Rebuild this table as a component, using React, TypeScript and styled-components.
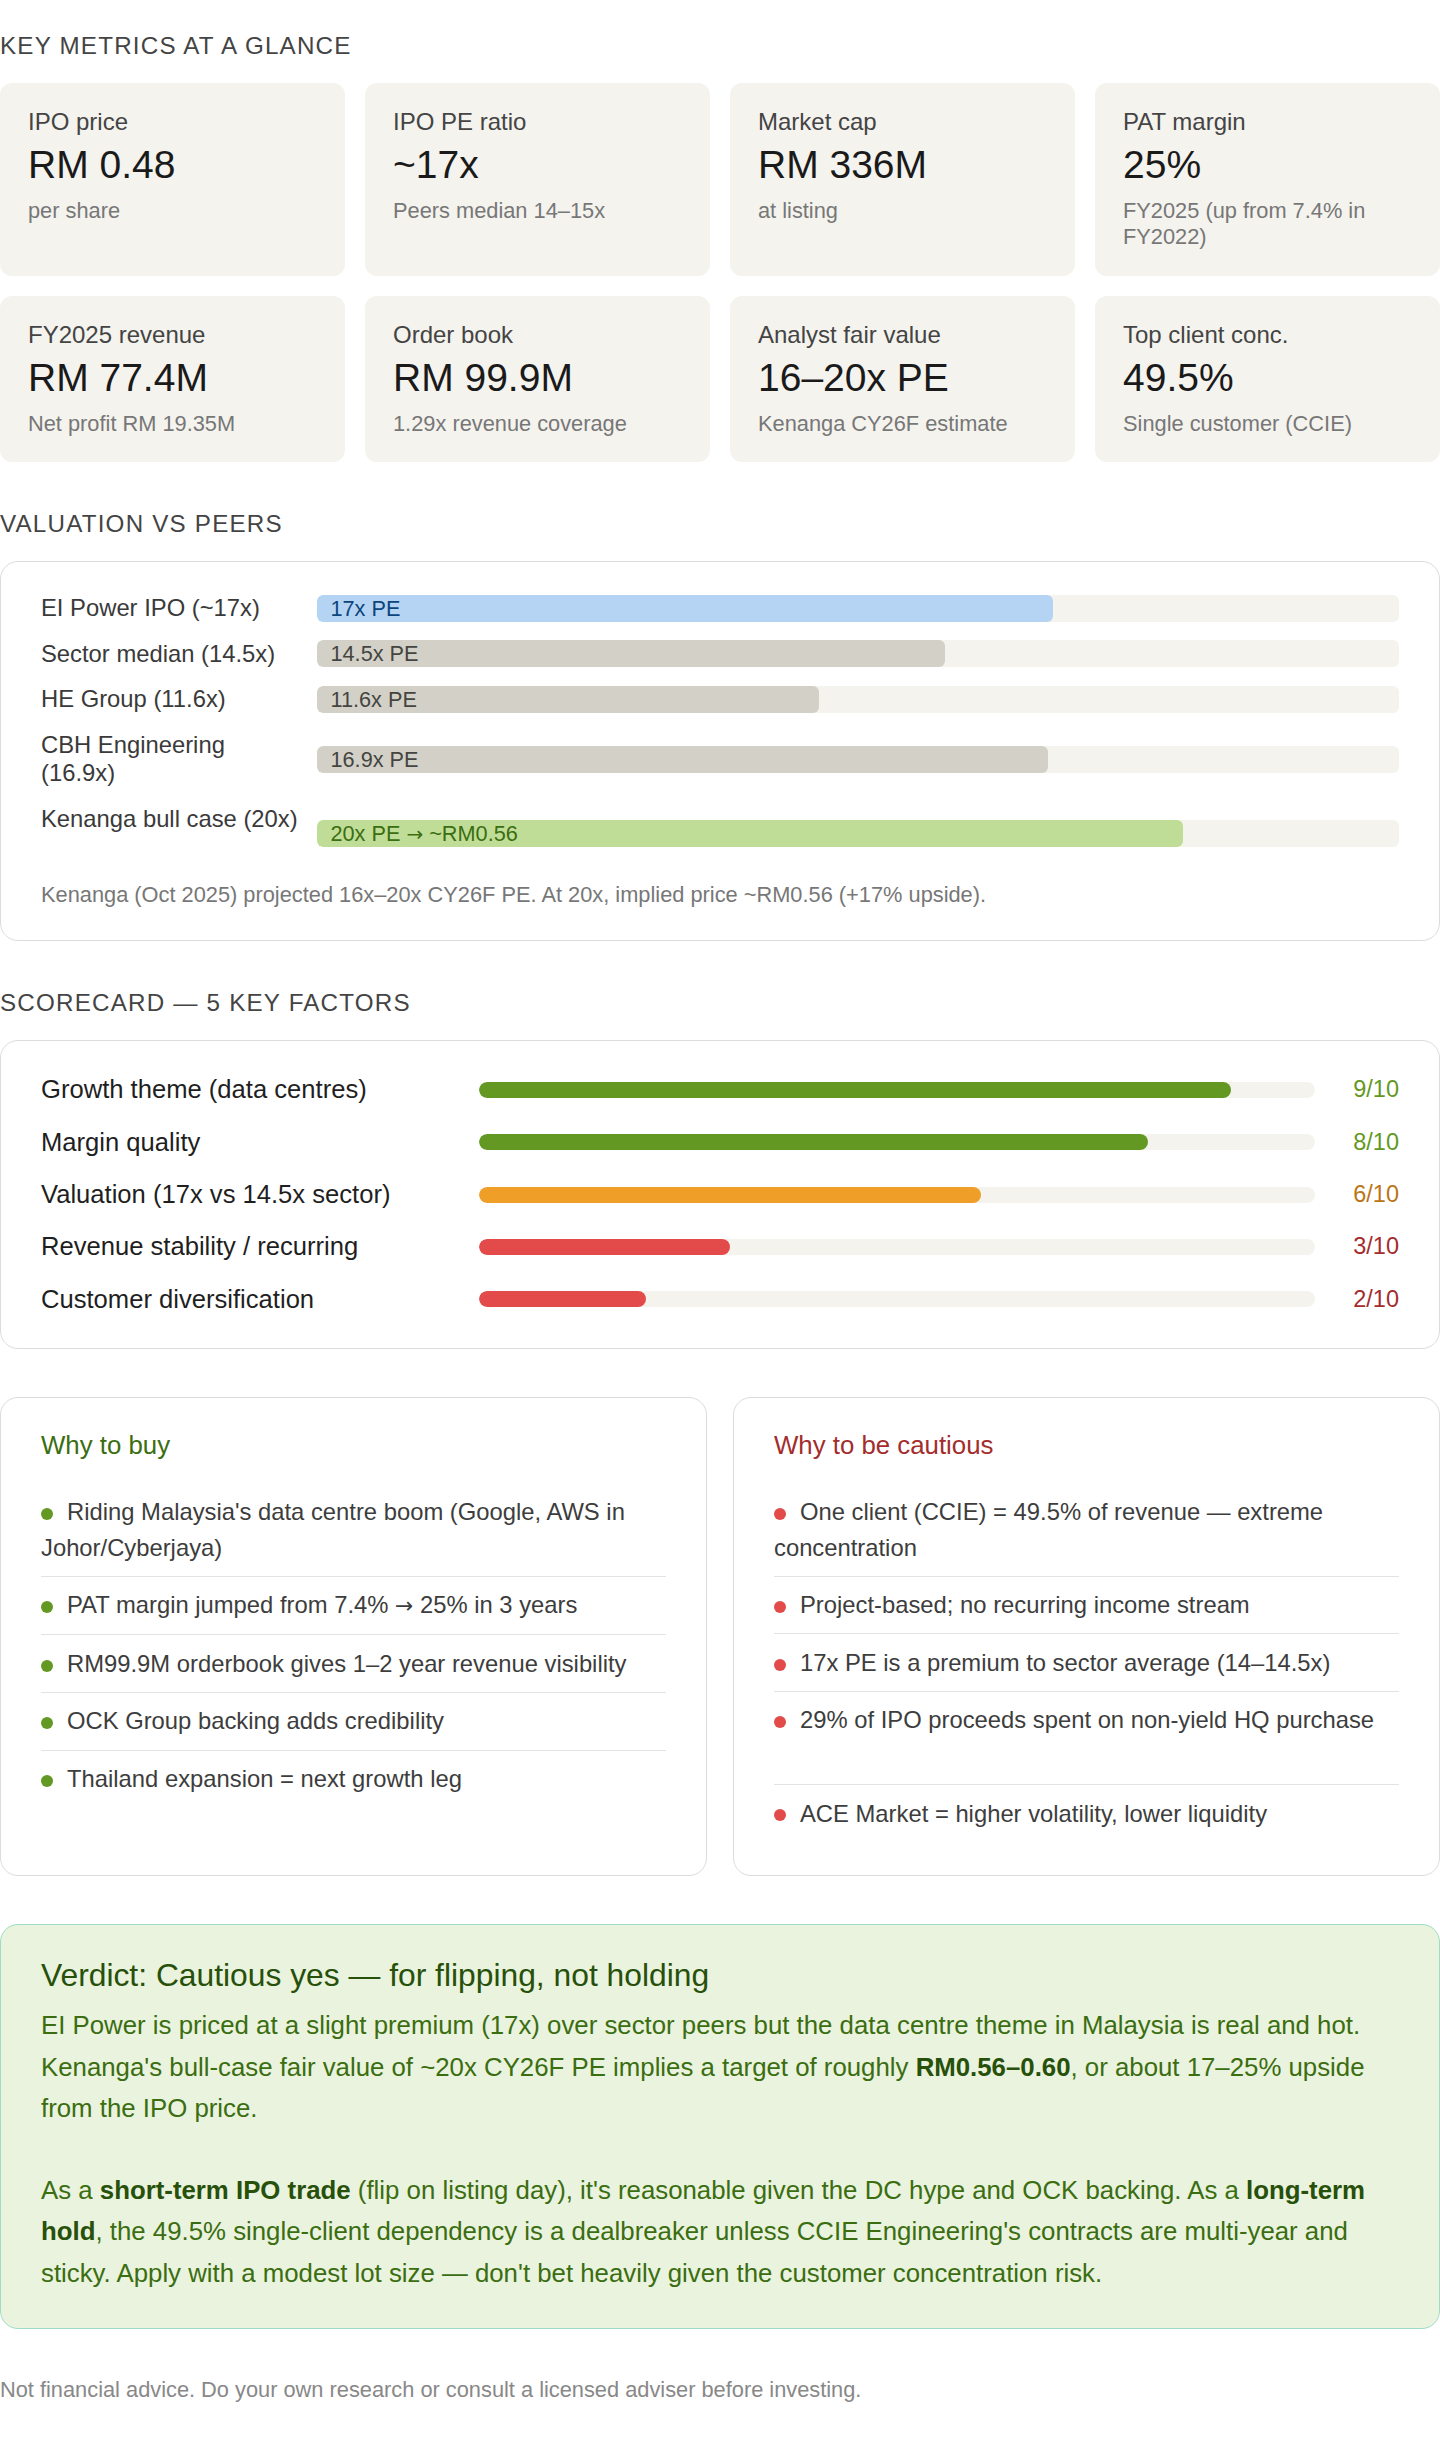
import React from "react";
import styled, { createGlobalStyle } from "styled-components";

const GlobalStyle = createGlobalStyle`
  body {
    margin: 0;
    background: #ffffff;
    font-family: "Liberation Sans", Arial, sans-serif;
    color: #1a1a1a;
  }
`;

interface Metric {
  label: string;
  value: string;
  sub: string;
}

const metrics: Metric[] = [
  { label: "IPO price", value: "RM 0.48", sub: "per share" },
  { label: "IPO PE ratio", value: "~17x", sub: "Peers median 14–15x" },
  { label: "Market cap", value: "RM 336M", sub: "at listing" },
  { label: "PAT margin", value: "25%", sub: "FY2025 (up from 7.4% in FY2022)" },
  { label: "FY2025 revenue", value: "RM 77.4M", sub: "Net profit RM 19.35M" },
  { label: "Order book", value: "RM 99.9M", sub: "1.29x revenue coverage" },
  { label: "Analyst fair value", value: "16–20x PE", sub: "Kenanga CY26F estimate" },
  { label: "Top client conc.", value: "49.5%", sub: "Single customer (CCIE)" },
];

type BarTone = "blue" | "grey" | "green";

interface Peer {
  label: string;
  pe: number;
  text: string;
  tone: BarTone;
  lines?: number;
}

const peers: Peer[] = [
  { label: "EI Power IPO (~17x)", pe: 17, text: "17x PE", tone: "blue" },
  { label: "Sector median (14.5x)", pe: 14.5, text: "14.5x PE", tone: "grey" },
  { label: "HE Group (11.6x)", pe: 11.6, text: "11.6x PE", tone: "grey" },
  { label: "CBH Engineering (16.9x)", pe: 16.9, text: "16.9x PE", tone: "grey" },
  { label: "Kenanga bull case (20x)", pe: 20, text: "20x PE → ~RM0.56", tone: "green", lines: 2 },
];

const PE_MAX = 25;

const barColors: Record<BarTone, { bg: string; fg: string }> = {
  blue: { bg: "#b5d4f4", fg: "#0c447c" },
  grey: { bg: "#d3d1c7", fg: "#444441" },
  green: { bg: "#c0dd97", fg: "#3b6d11" },
};

type ScoreTone = "good" | "mid" | "bad";

const scoreColors: Record<ScoreTone, { bar: string; text: string }> = {
  good: { bar: "#639922", text: "#639922" },
  mid: { bar: "#ef9f27", text: "#ba7517" },
  bad: { bar: "#e24b4a", text: "#a32d2d" },
};

const factors: { label: string; score: number; tone: ScoreTone }[] = [
  { label: "Growth theme (data centres)", score: 9, tone: "good" },
  { label: "Margin quality", score: 8, tone: "good" },
  { label: "Valuation (17x vs 14.5x sector)", score: 6, tone: "mid" },
  { label: "Revenue stability / recurring", score: 3, tone: "bad" },
  { label: "Customer diversification", score: 2, tone: "bad" },
];

const buyReasons: { text: string; lines?: number }[] = [
  { text: "Riding Malaysia's data centre boom (Google, AWS in Johor/Cyberjaya)" },
  { text: "PAT margin jumped from 7.4% → 25% in 3 years" },
  { text: "RM99.9M orderbook gives 1–2 year revenue visibility" },
  { text: "OCK Group backing adds credibility" },
  { text: "Thailand expansion = next growth leg" },
];

const cautionReasons: { text: string; lines?: number }[] = [
  { text: "One client (CCIE) = 49.5% of revenue — extreme concentration" },
  { text: "Project-based; no recurring income stream" },
  { text: "17x PE is a premium to sector average (14–14.5x)" },
  { text: "29% of IPO proceeds spent on non-yield HQ purchase", lines: 2 },
  { text: "ACE Market = higher volatility, lower liquidity" },
];

// the arrow glyph of Liberation Sans is tiny, so it is set in DejaVu
const withArrows = (text: string) => {
  const parts = text.split("→");
  return parts.map((part, i) => (
    <React.Fragment key={i}>
      {part}
      {i < parts.length - 1 && <Arrow>→</Arrow>}
    </React.Fragment>
  ));
};

const App = () => {
  return (
    <>
      <GlobalStyle />
      <Page>
        <Section>
          <SectionTitle>Key metrics at a glance</SectionTitle>
          <MetricGrid>
            {metrics.map((m) => (
              <MetricCard key={m.label}>
                <MetricLabel>{m.label}</MetricLabel>
                <MetricValue>{m.value}</MetricValue>
                <MetricSub>{m.sub}</MetricSub>
              </MetricCard>
            ))}
          </MetricGrid>
        </Section>

        <Section>
          <SectionTitle>Valuation vs peers</SectionTitle>
          <Panel>
            <PeerList>
              {peers.map((p) => (
                <PeerRow key={p.label}>
                  <PeerLabel $lines={p.lines ?? 1}>{p.label}</PeerLabel>
                  <PeerTrack>
                    <PeerFill
                      $tone={p.tone}
                      style={{ width: `${(p.pe / PE_MAX) * 100}%` }}
                    >
                      {withArrows(p.text)}
                    </PeerFill>
                  </PeerTrack>
                </PeerRow>
              ))}
            </PeerList>
            <Footnote>
              Kenanga (Oct 2025) projected 16x–20x CY26F PE. At 20x, implied
              price ~RM0.56 (+17% upside).
            </Footnote>
          </Panel>
        </Section>

        <Section>
          <SectionTitle>Scorecard — 5 key factors</SectionTitle>
          <ScorePanel>
            <ScoreList>
              {factors.map((f) => (
                <ScoreRow key={f.label}>
                  <ScoreLabel>{f.label}</ScoreLabel>
                  <ScoreTrack>
                    <ScoreFill
                      $tone={f.tone}
                      style={{ width: `${f.score * 10}%` }}
                    />
                  </ScoreTrack>
                  <ScoreValue $tone={f.tone}>{f.score}/10</ScoreValue>
                </ScoreRow>
              ))}
            </ScoreList>
          </ScorePanel>
        </Section>

        <ReasonGrid>
          <ReasonBox>
            <ReasonTitle $color="#3b6d11">Why to buy</ReasonTitle>
            <ReasonList>
              {buyReasons.map((r) => (
                <ReasonItem key={r.text} $lines={r.lines ?? 1}>
                  <Dot $color="#639922" />
                  {withArrows(r.text)}
                </ReasonItem>
              ))}
            </ReasonList>
          </ReasonBox>
          <ReasonBox>
            <ReasonTitle $color="#a32d2d">Why to be cautious</ReasonTitle>
            <ReasonList>
              {cautionReasons.map((r) => (
                <ReasonItem key={r.text} $lines={r.lines ?? 1}>
                  <Dot $color="#e24b4a" />
                  {withArrows(r.text)}
                </ReasonItem>
              ))}
            </ReasonList>
          </ReasonBox>
        </ReasonGrid>

        <Verdict>
          <VerdictTitle>Verdict: Cautious yes — for flipping, not holding</VerdictTitle>
          <VerdictText>
            EI Power is priced at a slight premium (17x) over sector peers but
            the data centre theme in Malaysia is real and hot. Kenanga's
            bull-case fair value of ~20x CY26F PE implies a target of roughly{" "}
            <strong>RM0.56–0.60</strong>, or about 17–25% upside from the IPO
            price.
          </VerdictText>
          <VerdictText>
            As a <strong>short-term IPO trade</strong> (flip on listing day),
            it's reasonable given the DC hype and OCK backing. As a{" "}
            <strong>long-term hold</strong>, the 49.5% single-client dependency
            is a dealbreaker unless CCIE Engineering's contracts are multi-year
            and sticky. Apply with a modest lot size — don't bet heavily given
            the customer concentration risk.
          </VerdictText>
        </Verdict>

        <Disclaimer>
          Not financial advice. Do your own research or consult a licensed
          adviser before investing.
        </Disclaimer>
      </Page>
    </>
  );
};

export default App;

const Page = styled.main`
  display: flex;
  flex-direction: column;
  gap: 48px;
  padding: 32px 0 48px;
`;

const Section = styled.section`
  display: flex;
  flex-direction: column;
`;

const SectionTitle = styled.h2`
  margin: 0 0 23px;
  font-size: 24.2px;
  font-weight: 400;
  line-height: normal;
  letter-spacing: 1.2px;
  text-transform: uppercase;
  color: #444444;
`;

const MetricGrid = styled.div`
  display: grid;
  grid-template-columns: repeat(4, 1fr);
  gap: 20px;
`;

const MetricCard = styled.div`
  background: #f4f3ee;
  border-radius: 12px;
  padding: 25px 28px 25.5px;
`;

const MetricLabel = styled.div`
  font-size: 24px;
  line-height: normal;
  color: #444444;
  margin-bottom: 7px;
`;

const MetricValue = styled.div`
  font-size: 39px;
  line-height: normal;
  color: #1a1a1a;
  margin-bottom: 11px;
`;

const MetricSub = styled.div`
  font-size: 21.8px;
  line-height: normal;
  color: #777777;
`;

const Panel = styled.div`
  border: 1.5px solid #dcdcdc;
  border-radius: 18px;
  padding: 32px 40px;
`;

const ScorePanel = styled(Panel)`
  padding: 34px 40px 34px;
`;

const PeerList = styled.div`
  display: flex;
  flex-direction: column;
  gap: 17.5px;
`;

const PeerRow = styled.div`
  display: grid;
  grid-template-columns: 258px 1fr;
  column-gap: 18px;
  align-items: center;
`;

const PeerLabel = styled.div<{ $lines: number }>`
  font-size: 23.8px;
  line-height: 28.2px;
  min-height: ${({ $lines }) => $lines * 28.2}px;
  color: #3a3a3a;
`;

const PeerTrack = styled.div`
  height: 27px;
  background: #f4f3ee;
  border-radius: 6px;
  overflow: hidden;
`;

const PeerFill = styled.div<{ $tone: BarTone }>`
  height: 100%;
  box-sizing: border-box;
  padding-left: 13.5px;
  border-radius: 6px;
  background: ${({ $tone }) => barColors[$tone].bg};
  color: ${({ $tone }) => barColors[$tone].fg};
  font-size: 21.7px;
  line-height: 27px;
  white-space: nowrap;
`;

const Arrow = styled.span`
  font-family: "DejaVu Sans", sans-serif;
  font-size: 0.92em;
`;

const Footnote = styled.p`
  margin: 21px 0 0;
  font-size: 21.8px;
  line-height: normal;
  color: #777777;
`;

const ScoreList = styled.div`
  display: flex;
  flex-direction: column;
  gap: 23.3px;
`;

const ScoreRow = styled.div`
  display: grid;
  grid-template-columns: 414px 1fr 60px;
  column-gap: 24px;
  align-items: center;
`;

const ScoreLabel = styled.div`
  font-size: 25.6px;
  line-height: normal;
  color: #1f1f1f;
`;

const ScoreTrack = styled.div`
  height: 16px;
  border-radius: 8px;
  background: #f4f3ee;
  overflow: hidden;
`;

const ScoreFill = styled.div<{ $tone: ScoreTone }>`
  height: 100%;
  border-radius: 8px;
  background: ${({ $tone }) => scoreColors[$tone].bar};
`;

const ScoreValue = styled.div<{ $tone: ScoreTone }>`
  text-align: right;
  font-size: 23.5px;
  line-height: normal;
  color: ${({ $tone }) => scoreColors[$tone].text};
`;

const ReasonGrid = styled.div`
  display: grid;
  grid-template-columns: 1fr 1fr;
  gap: 26px;
`;

const ReasonBox = styled.div`
  border: 1.5px solid #dcdcdc;
  border-radius: 18px;
  padding: 33px 40px 33px;
`;

const ReasonTitle = styled.h3<{ $color: string }>`
  margin: 0 0 24px;
  font-size: 25.8px;
  font-weight: 400;
  line-height: normal;
  color: ${({ $color }) => $color};
`;

const ReasonList = styled.ul`
  list-style: none;
  margin: 0;
  padding: 0;
`;

const ReasonItem = styled.li<{ $lines: number }>`
  padding: 10.5px 0;
  font-size: 23.8px;
  line-height: 35.6px;
  min-height: ${({ $lines }) => $lines * 35.6}px;
  color: #3d3d3d;
  border-bottom: 1.5px solid #e3e3e3;

  &:last-child {
    border-bottom: none;
  }
`;

const Dot = styled.span<{ $color: string }>`
  display: inline-block;
  width: 12px;
  height: 12px;
  margin-right: 14px;
  border-radius: 50%;
  vertical-align: middle;
  background: ${({ $color }) => $color};
`;

const Verdict = styled.div`
  background: #eaf3de;
  border: 1.5px solid #9fdcc4;
  border-radius: 18px;
  padding: 32px 39px 33px 40px;
`;

const VerdictTitle = styled.h3`
  margin: 0 0 11px;
  font-size: 31.8px;
  font-weight: 400;
  line-height: normal;
  color: #27500a;
`;

const VerdictText = styled.p`
  margin: 0;
  font-size: 25.8px;
  line-height: 41.8px;
  color: #3b6d11;

  & + & {
    margin-top: 39.5px;
  }

  strong {
    font-weight: 700;
    color: #27500a;
  }
`;

const Disclaimer = styled.p`
  margin: 0;
  font-size: 21.8px;
  line-height: normal;
  color: #888888;
`;
